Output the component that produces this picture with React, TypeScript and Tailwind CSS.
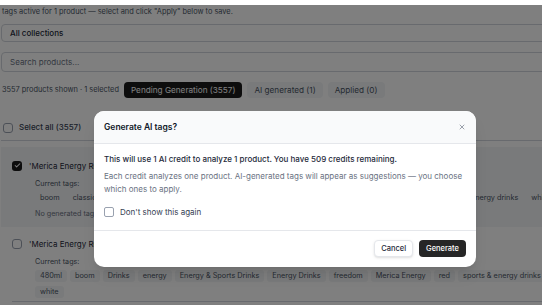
import { Check, X } from "lucide-react";

const tags1 = ["boom", "classic", "Drinks", "energy", "Energy & Sports Drinks", "Energy Drinks", "freedom", "Merica Energy", "sports & energy drinks", "white"];
const tags2 = ["480ml", "boom", "Drinks", "energy", "Energy & Sports Drinks", "Energy Drinks", "freedom", "Merica Energy", "red", "sports & energy drinks", "white"];

const Tag = ({ label }: { label: string }) => (
  <span className="h-[12px] shrink-0 whitespace-nowrap rounded-[3px] bg-gray-100 px-[5px] text-[7.3px] leading-[12px] text-gray-600">
    {label}
  </span>
);

const App = () => {
  return (
    <div
      className="relative h-[305px] w-[542px] overflow-hidden bg-white text-gray-900"
      style={{ fontFamily: "Inter, 'Liberation Sans', sans-serif" }}
    >
      <div className="w-[580px] pl-[1px] pt-[7px]">
        <p className="pl-[1px] text-[7.4px] leading-[10px] text-gray-600">
          tags active for 1 product — select and click "Apply" below to save.
        </p>

        <div className="mt-[7px] flex h-[18px] items-center rounded-[4px] border border-gray-300 pl-[8px] text-[8px] font-medium text-gray-800">
          All collections
        </div>
        <div className="mt-[10px] flex h-[20px] items-center rounded-[4px] border border-gray-300 pl-[8px] text-[8px] text-gray-500">
          Search products...
        </div>

        <div className="mt-[10px] flex h-[16px] items-center gap-[5px]">
          <span className="pl-[1px] text-[7.4px] text-gray-600">3557 products shown · 1 selected</span>
          <span className="flex h-[16px] items-center rounded-[4px] bg-[#1a1a1a] px-[7px] text-[8.2px] text-white">
            Pending Generation (3557)
          </span>
          <span className="flex h-[16px] items-center rounded-[4px] bg-gray-100 px-[7px] text-[8.2px] text-gray-600">
            AI generated (1)
          </span>
          <span className="flex h-[16px] items-center rounded-[4px] bg-gray-100 px-[7px] text-[8.2px] text-gray-600">
            Applied (0)
          </span>
        </div>

        <div className="mt-[24px] flex h-[19px] items-start gap-[6px] border-b border-gray-300 pl-[2px]">
          <span className="mt-[1px] h-[10px] w-[10px] rounded-[3px] border border-gray-400 bg-white" />
          <span className="text-[8px] leading-[11px] font-medium text-gray-700">Select all (3557)</span>
        </div>

        <div className="mt-[6px] bg-gray-100 pb-[8px] pl-[11px] pt-[13px]">
          <div className="flex h-[11px] items-center gap-[7px]">
            <span className="flex h-[10px] w-[10px] items-center justify-center rounded-[3px] bg-[#1a1a1a]">
              <Check className="h-[7px] w-[7px] text-white" strokeWidth={3.5} />
            </span>
            <span className="text-[8px] text-gray-800">'Merica Energy Red</span>
          </div>
          <div className="mt-[8px] pl-[23px] text-[7.2px] leading-[10px] text-gray-600">Current tags:</div>
          <div className="mt-[3px] flex gap-[3px] pl-[23px]">
            {tags1.map((t) => (
              <Tag key={t} label={t} />
            ))}
          </div>
          <div className="mt-[5px] pl-[23px] text-[7.2px] leading-[10px] text-gray-500">No generated tags</div>
        </div>

        <div className="pl-[11px] pt-[11px]">
          <div className="flex h-[11px] items-center gap-[7px]">
            <span className="h-[10px] w-[10px] rounded-[3px] border border-gray-400 bg-white" />
            <span className="text-[8px] text-gray-800">'Merica Energy Red</span>
          </div>
          <div className="mt-[8px] pl-[23px] text-[7.2px] leading-[10px] text-gray-600">Current tags:</div>
          <div className="mt-[3px] flex w-[540px] flex-wrap gap-x-[3px] gap-y-[4px] pl-[23px]">
            {tags2.map((t) => (
              <Tag key={t} label={t} />
            ))}
          </div>
          <div className="mt-[3px] border-b border-gray-300" />
        </div>
      </div>

      <div className="absolute inset-x-0 bottom-0 top-[5px] bg-black/50" />

      <div className="absolute left-[94px] top-[111px] w-[382px] overflow-hidden rounded-[10px] bg-white shadow-lg">
        <div className="flex h-[33px] items-center justify-between border-b border-gray-200 bg-gray-50 px-[10px]">
          <span className="text-[8.5px] font-semibold text-gray-900">Generate AI tags?</span>
          <X className="h-[8px] w-[8px] text-gray-500" strokeWidth={2} />
        </div>
        <div className="px-[10px] pb-[13px] pt-[9px]">
          <p className="text-[8px] font-medium leading-[12px] text-gray-800">
            This will use 1 AI credit to analyze 1 product. You have 509 credits remaining.
          </p>
          <p className="mt-[5px] text-[8px] leading-[13px] text-gray-500">
            Each credit analyzes one product. AI-generated tags will appear as suggestions — you choose which ones to apply.
          </p>
          <label className="mt-[11px] flex h-[10px] items-center gap-[6px]">
            <span className="h-[10px] w-[10px] rounded-[2px] border border-gray-400" />
            <span className="text-[8px] text-gray-700">Don't show this again</span>
          </label>
        </div>
        <div className="flex justify-end gap-[6px] border-t border-gray-200 px-[10px] pb-[10px] pt-[9px]">
          <button className="h-[17px] rounded-[4px] border border-gray-200 bg-white px-[6px] text-[7.5px] font-medium text-gray-800 shadow-sm">
            Cancel
          </button>
          <button className="h-[17px] rounded-[4px] bg-[#262626] px-[7px] text-[7.5px] font-medium text-white">
            Generate
          </button>
        </div>
      </div>
    </div>
  );
};

export default App;
